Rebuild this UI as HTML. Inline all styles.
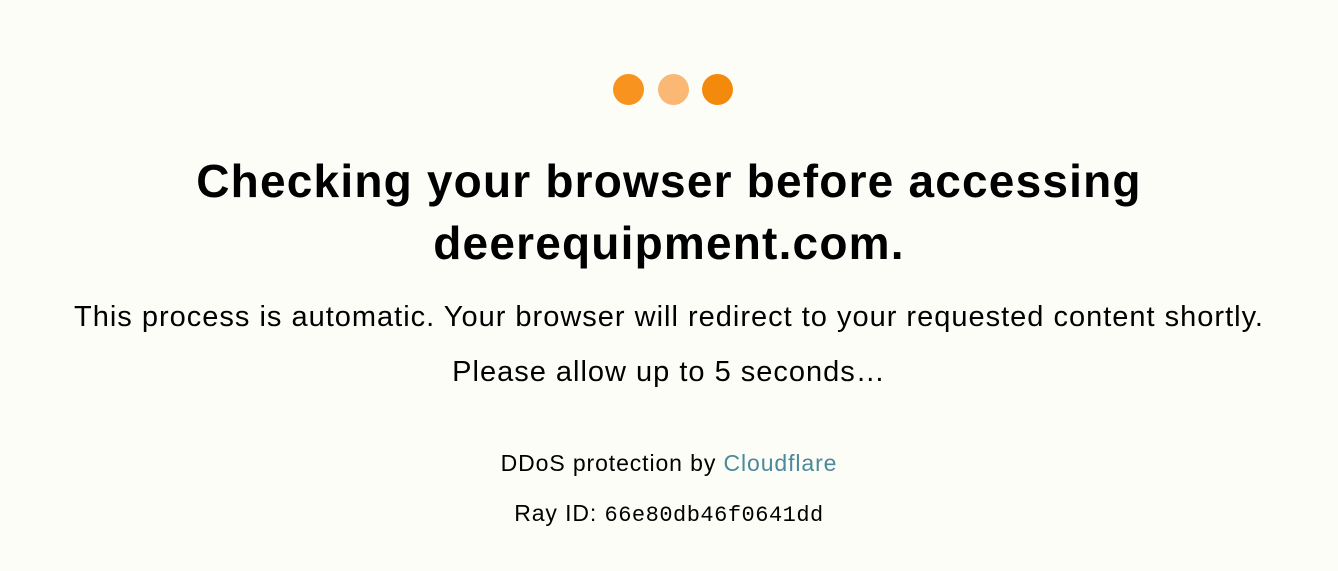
<!DOCTYPE html>
<html><head><style>
html,body{margin:0;padding:0;background:#fdfdf8;width:1338px;height:571px;overflow:hidden;font-family:"Liberation Sans",sans-serif;color:#000;}
.d{position:absolute;top:74px;width:31px;height:31px;border-radius:50%;}
h1{position:absolute;top:150px;left:0;width:1338px;margin:0;text-align:center;font-size:46px;line-height:62px;font-weight:bold;letter-spacing:1.2px;}
.p{position:absolute;left:0;width:1338px;text-align:center;font-size:29px;letter-spacing:1px;}
.s{position:absolute;left:0;width:1338px;text-align:center;font-size:23px;letter-spacing:0.9px;}
a{color:#4a8a9a;text-decoration:none;}
code{font-family:"Liberation Mono",monospace;font-size:22px;letter-spacing:0.5px;}
</style></head><body>
<div class="d" style="left:613px;background:#f7931e"></div>
<div class="d" style="left:658px;background:#fbb774"></div>
<div class="d" style="left:702px;background:#f48a0c"></div>
<h1>Checking your browser before accessing<br>deerequipment.com.</h1>
<div class="p" style="top:301px">This process is automatic. Your browser will redirect to your requested content shortly.</div>
<div class="p" style="top:356px">Please allow up to 5 seconds…</div>
<div class="s" style="top:450px">DDoS protection by <a>Cloudflare</a></div>
<div class="s" style="top:500px">Ray ID: <code>66e80db46f0641dd</code></div>
</body></html>
